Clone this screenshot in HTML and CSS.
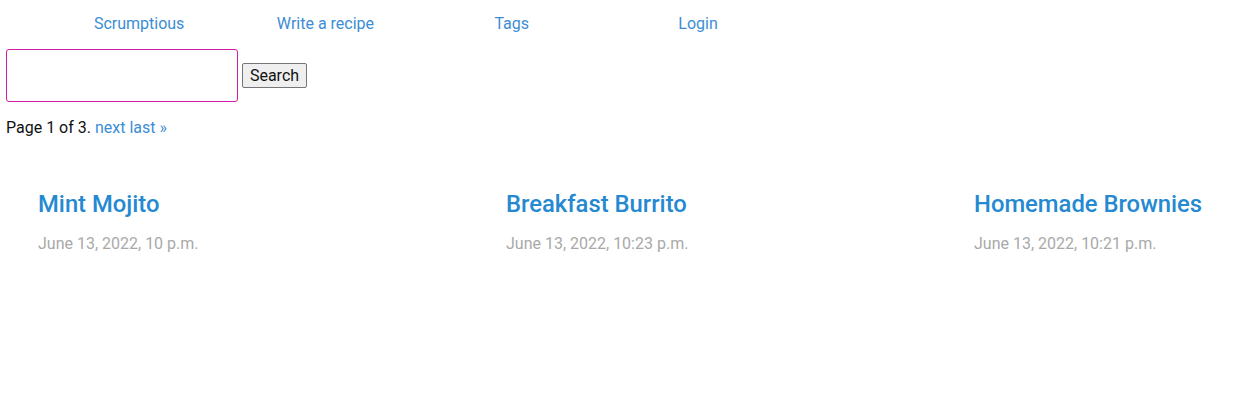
FILE: index.html
```html
<!DOCTYPE html>
<html>
<head>
<meta charset="utf-8">
<link rel="stylesheet" href="styles.css">
</head>
<body>
<nav class="nav">
  <a class="nav-item" href="#">Scrumptious</a>
  <a class="nav-item" href="#">Write a recipe</a>
  <a class="nav-item" href="#">Tags</a>
  <a class="nav-item" href="#">Login</a>
</nav>
<form class="search">
  <input class="search-input" type="text">
  <button class="search-btn" type="button">Search</button>
</form>
<p class="pager">Page 1 of 3. <a href="#">next</a> <a href="#">last &raquo;</a></p>
<main class="recipes">
  <div class="card">
    <h2 class="card-title"><a href="#">Mint Mojito</a></h2>
    <p class="card-date">June 13, 2022, 10 p.m.</p>
  </div>
  <div class="card">
    <h2 class="card-title"><a href="#">Breakfast Burrito</a></h2>
    <p class="card-date">June 13, 2022, 10:23 p.m.</p>
  </div>
  <div class="card">
    <h2 class="card-title"><a href="#">Homemade Brownies</a></h2>
    <p class="card-date">June 13, 2022, 10:21 p.m.</p>
  </div>
</main>
</body>
</html>
```

FILE: styles.css
```css
* { box-sizing: border-box; }
html, body { margin: 0; padding: 0; background: #fff; }
body {
  font-family: Roboto, "Liberation Sans", sans-serif;
  font-size: 16px;
  color: #111;
  padding: 0 6px;
  overflow: hidden;
}
a { color: #3c8dd4; text-decoration: none; }
.nav {
  display: flex;
  padding-left: 40px;
  padding-top: 2px;
  height: 46px;
  align-items: center;
}
.nav-item {
  width: 186.3px;
  text-align: center;
  line-height: 20px;
}
.search {
  display: flex;
  align-items: center;
  gap: 4px;
  margin-top: 3px;
}
.search-input {
  width: 232px;
  height: 53px;
  border: 1px solid #d21ca8;
  border-radius: 3px;
  margin: 0;
  outline: none;
}
.search-btn {
  font-family: Roboto, "Liberation Sans", sans-serif;
  font-size: 16px;
  height: 25px;
  width: 65px;
  padding: 0;
  margin: 0 0 1px;
  background: #efefef;
  border: 1px solid #767676;
  border-radius: 2px;
  color: #111;
}
.pager {
  margin: 16px 0 0;
  line-height: 19px;
}
.recipes {
  display: grid;
  grid-template-columns: 436px 436px minmax(0, 1fr);
  column-gap: 32px;
  padding-left: 32px;
  margin-top: 52px;
}
.card-title {
  margin: 0;
  font-size: 23.8px;
  font-weight: 500;
  line-height: 30px;
}
.card-title a { color: #2589d2; }
.card-date {
  margin: 15px 0 0;
  color: #a9a9a9;
  line-height: 20px;
}
```
